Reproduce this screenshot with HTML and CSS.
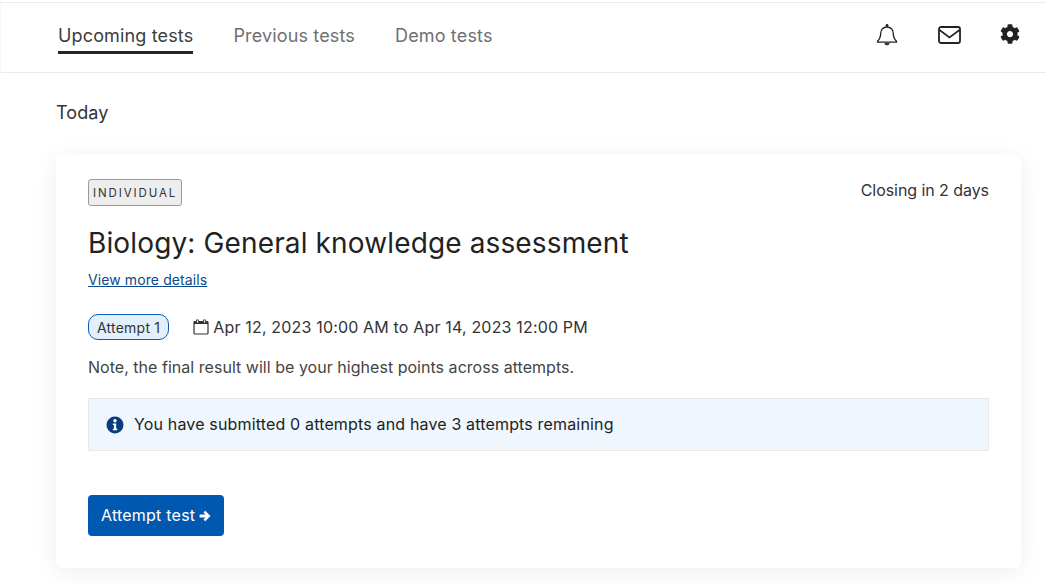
FILE: index.html
```html
<!DOCTYPE html>
<html lang="en">
<head>
<meta charset="utf-8">
<title>Tests</title>
<link rel="stylesheet" href="styles.css">
</head>
<body>
<header class="topbar">
  <nav class="tabs">
    <a class="tab active">Upcoming tests</a>
    <a class="tab">Previous tests</a>
    <a class="tab">Demo tests</a>
  </nav>
  <div class="actions">
    <svg class="ico bell" viewBox="0 0 22 24" width="22" height="24"><path d="M1.500 19.300c1.800-1.700 3.200-3.600 3.200-8 0-3.600 2.600-6.300 6.300-6.300s6.300 2.700 6.300 6.300c0 4.400 1.400 6.300 3.200 8 .3.400.1.900-.4.900H1.900c-.5 0-.7-.5-.4-.9z" fill="none" stroke="#222" stroke-width="1.300"/><circle cx="11" cy="3.500" r="1.400" fill="#222"/><path d="M8.500 21h5c0 1.600-1.100 2.300-2.500 2.300S8.500 22.600 8.500 21z" fill="#333"/></svg>
    <svg class="ico mail" viewBox="0 0 23 18" width="23" height="18"><rect x="1" y="1" width="21" height="16" rx="2" fill="none" stroke="#222" stroke-width="1.800"/><path d="M1.500 4l10 7.500 10-7.500" fill="none" stroke="#222" stroke-width="1.600"/></svg>
    <svg class="ico" viewBox="0 0 512 512" width="20" height="20"><path fill="#222" d="M487.400 315.700l-42.600-24.600c4.300-23.200 4.300-47 0-70.200l42.600-24.600c4.900-2.800 7.100-8.600 5.500-14-11.100-35.600-30-67.800-54.700-94.600-3.800-4.100-10-5.100-14.800-2.300L380.800 110c-17.900-15.400-38.500-27.300-60.800-35.100V25.800c0-5.600-3.900-10.500-9.400-11.700-36.700-8.200-74.300-7.800-109.200 0-5.500 1.200-9.400 6.100-9.400 11.700V75c-22.200 7.900-42.800 19.800-60.800 35.100L88.700 85.500c-4.900-2.800-11-1.900-14.800 2.300-24.700 26.700-43.600 58.900-54.700 94.600-1.700 5.400.6 11.200 5.500 14L67.300 221c-4.300 23.200-4.300 47 0 70.200l-42.600 24.600c-4.900 2.800-7.100 8.600-5.500 14 11.100 35.600 30 67.800 54.700 94.600 3.800 4.100 10 5.100 14.800 2.300l42.600-24.600c17.900 15.400 38.500 27.300 60.800 35.100v49.200c0 5.600 3.900 10.500 9.400 11.700 36.700 8.200 74.300 7.800 109.200 0 5.500-1.200 9.400-6.100 9.400-11.700v-49.200c22.200-7.900 42.800-19.800 60.800-35.100l42.600 24.600c4.900 2.800 11 1.900 14.800-2.300 24.700-26.700 43.600-58.900 54.700-94.600 1.500-5.500-.7-11.300-5.600-14.100zM256 336c-44.100 0-80-35.900-80-80s35.900-80 80-80 80 35.900 80 80-35.900 80-80 80z"/></svg>
  </div>
</header>
<main class="content">
  <h2 class="day">Today</h2>
  <section class="card">
    <div class="card-top">
      <span class="tag">INDIVIDUAL</span>
      <span class="closing">Closing in 2 days</span>
    </div>
    <h1 class="title">Biology: General knowledge assessment</h1>
    <a class="details">View more details</a>
    <div class="meta">
      <span class="pill">Attempt 1</span>
      <span class="dates">
        <svg class="cal" viewBox="0 0 16 16" width="16" height="16"><rect x="1" y="2.500" width="14" height="12.500" rx="1" fill="none" stroke="#333" stroke-width="1.200"/><rect x="1" y="2.500" width="14" height="2.500" fill="#333"/><rect x="3.500" y="1" width="2" height="3" fill="#fff" stroke="#333" stroke-width=".8"/><rect x="10.500" y="1" width="2" height="3" fill="#fff" stroke="#333" stroke-width=".8"/></svg>
        Apr 12, 2023 10:00 AM to Apr 14, 2023 12:00 PM
      </span>
    </div>
    <p class="note">Note, the final result will be your highest points across attempts.</p>
    <div class="info">
      <svg class="info-ico" viewBox="0 0 18 18" width="18" height="18"><circle cx="9" cy="9" r="8.500" fill="#0b3a7e"/><circle cx="9" cy="4.700" r="1.700" fill="#fff"/><path d="M6.800 7.500h3.400v5.200h1.100v1.600H6.800v-1.600h1.100V9.100H6.800z" fill="#fff"/></svg>
      <span class="info-text">You have submitted 0 attempts and have 3 attempts remaining</span>
    </div>
    <button class="cta"><span class="cta-text">Attempt test</span> <svg class="arrow" viewBox="0 0 12 12" width="12" height="12"><path d="M6.200.800L11.500 6l-5.300 5.200-1.700-1.700 2-2H.6v-3h5.900l-2-2z" fill="#fff"/></svg></button>
  </section>
</main>
</body>
</html>
```
FILE: styles.css
```css
* { box-sizing: border-box; }
html, body { margin: 0; height: 585px; overflow: hidden; }
body {
  background: #fff;
  font-family: Inter, "Liberation Sans", sans-serif;
  color: #222;
  padding-top: 2px;
}
.topbar {
  height: 71px;
  border-top: 1px solid #ebebeb;
  border-bottom: 1px solid #ebebeb;
  border-left: 1px solid #f7f7f7;
  padding: 0 26px 0 57px;
  display: flex;
  justify-content: space-between;
  align-items: flex-start;
}
.tabs { display: flex; gap: 40px; padding-top: 22px; }
.tab {
  font-size: 18px;
  line-height: 22px;
  letter-spacing: .15px;
  color: #6f6f6f;
  padding-bottom: 4px;
  border-bottom: 3px solid transparent;
}
.tab.active { color: #3c3c3c; border-bottom-color: #262626; }
.actions { display: flex; align-items: center; gap: 39px; padding-top: 19px; }
.ico { display: block; }
.bell { margin-right: 1px; }
.mail { margin-top: 2px; }
.content { padding: 28px 25px 0 56px; }
.day {
  margin: 0 0 30px;
  font-size: 18px;
  line-height: 24px;
  font-weight: 400;
  letter-spacing: .1px;
  color: #333;
}
.card {
  height: 413px;
  background: #fff;
  border-radius: 6px;
  box-shadow: 0 4px 24px rgba(0, 0, 0, .07);
  padding: 24px 32px;
}
.card-top { display: flex; justify-content: space-between; align-items: flex-start; }
.tag {
  height: 27px;
  padding: 0 4px;
  display: flex;
  align-items: center;
  font-size: 11.500px;
  letter-spacing: 1.900px;
  color: #333;
  background: #ededed;
  border: 1px solid #999;
  border-radius: 3px;
}
.closing { font-size: 16px; line-height: 22px; letter-spacing: -.06px; color: #333; }
.title {
  margin: 20px 0 0;
  font-size: 28px;
  line-height: 34px;
  font-weight: 400;
  letter-spacing: .135px;
  color: #222;
}
.details {
  display: inline-block;
  margin-top: 11px;
  font-size: 14px;
  line-height: 18px;
  letter-spacing: .1px;
  color: #0b4a8c;
  text-decoration: underline;
}
.meta { display: flex; align-items: center; margin-top: 25px; gap: 24px; }
.pill {
  height: 26px;
  padding: 0 8px;
  display: flex;
  align-items: center;
  font-size: 14px;
  letter-spacing: .22px;
  color: #333;
  background: #e2effd;
  border: 1px solid #0b5cb0;
  border-radius: 10px;
}
.dates { display: flex; align-items: center; gap: 4px; font-size: 16px; letter-spacing: .17px; color: #333; }
.cal { display: block; }
.note { margin: 15px 0 0; font-size: 16px; line-height: 24px; letter-spacing: .03px; color: #444; }
.info {
  margin-top: 19px;
  height: 53px;
  display: flex;
  align-items: center;
  gap: 10px;
  padding-left: 17px;
  background: #eff6fd;
  border: 1px solid #e8e8e8;
  font-size: 16px;
  letter-spacing: .16px;
  color: #222;
}
.info-text { line-height: 22px; padding-bottom: 2px; }
.info-ico { display: block; }
.cta {
  display: flex;
  align-items: center;
  gap: 4px;
  margin-top: 44px;
  height: 41px;
  padding: 0 13px;
  background: #0058b0;
  color: #fff;
  border: 0;
  border-radius: 4px;
  font-family: inherit;
  font-size: 16px;
  letter-spacing: .22px;
}
.cta-text { line-height: 22px; padding-bottom: 2px; }
.arrow { display: block; }
```
